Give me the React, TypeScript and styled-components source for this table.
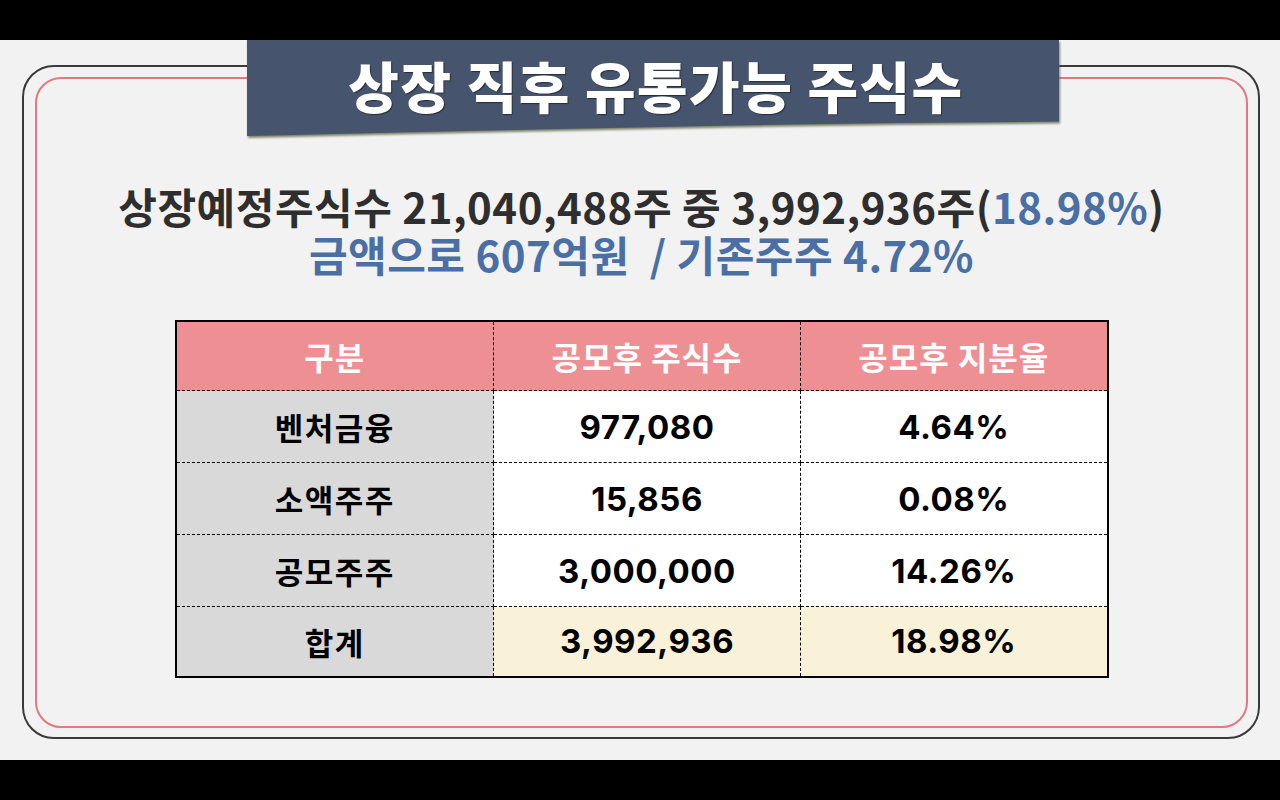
import React from "react";
import styled, { createGlobalStyle } from "styled-components";

interface RowData {
  label: string;
  shares: string;
  ratio: string;
  total?: boolean;
}

const rows: RowData[] = [
  { label: "벤처금융", shares: "977,080", ratio: "4.64%" },
  { label: "소액주주", shares: "15,856", ratio: "0.08%" },
  { label: "공모주주", shares: "3,000,000", ratio: "14.26%" },
  { label: "합계", shares: "3,992,936", ratio: "18.98%", total: true },
];

const headData = ["구분", "공모후 주식수", "공모후 지분율"];

export default function App() {
  return (
    <>
      <GlobalStyle />
      <Page>
        <BlackBar />
        <Stage>
          <OuterFrame>
            <InnerFrame>
              <Summary>
                <SummaryLine>
                  상장예정주식수 21,040,488주 중 3,992,936주(<Blue>18.98%</Blue>)
                </SummaryLine>
                <SummaryLine $blue>금액으로 607억원&nbsp;&nbsp;/ 기존주주 4.72%</SummaryLine>
              </Summary>

              <Table>
                <colgroup>
                  <col style={{ width: 318 }} />
                  <col style={{ width: 307 }} />
                  <col style={{ width: 307 }} />
                </colgroup>
                <thead>
                  <tr>
                    {headData.map((data) => (
                      <HeadCell key={data}>{data}</HeadCell>
                    ))}
                  </tr>
                </thead>
                <tbody>
                  {rows.map((row) => (
                    <BodyRow key={row.label} $total={row.total}>
                      <LabelCell>{row.label}</LabelCell>
                      <ValueCell $total={row.total}>{row.shares}</ValueCell>
                      <ValueCell $total={row.total}>{row.ratio}</ValueCell>
                    </BodyRow>
                  ))}
                </tbody>
              </Table>
            </InnerFrame>
          </OuterFrame>

          <BannerWrap>
            <Banner>
              <BannerTitle>상장 직후 유통가능 주식수</BannerTitle>
            </Banner>
          </BannerWrap>
        </Stage>
        <BlackBar />
      </Page>
    </>
  );
}

const GlobalStyle = createGlobalStyle`
  html, body {
    margin: 0;
    padding: 0;
    background: #000;
  }
  body {
    font-family: "Noto Sans CJK KR", "Noto Sans", sans-serif;
  }
`;

const Page = styled.div`
  width: 1280px;
  height: 800px;
  display: flex;
  flex-direction: column;
  overflow: hidden;
`;

const BlackBar = styled.div`
  height: 40px;
  flex: none;
  background: #000;
`;

const Stage = styled.main`
  position: relative;
  flex: 1;
  background: #f2f2f2;
  padding: 25px 20px 21px 22px;
  box-sizing: border-box;
  display: flex;
`;

const OuterFrame = styled.div`
  flex: 1;
  border: 2px solid #3a3a3a;
  border-radius: 32px;
  padding: 10px 10px 9px 11px;
  display: flex;
`;

const InnerFrame = styled.div`
  flex: 1;
  border: 2px solid #e07a80;
  border-radius: 26px;
  padding-top: 103px;
  display: flex;
  flex-direction: column;
  align-items: center;
`;

const BannerWrap = styled.div`
  position: absolute;
  top: 0;
  left: 247px;
  width: 812px;
  height: 96px;
  filter: drop-shadow(1px 2px 1px rgba(96, 104, 70, 0.8));
`;

const Banner = styled.div`
  height: 100%;
  background: #46556d;
  display: flex;
  align-items: center;
  justify-content: center;
  clip-path: polygon(
    0 0,
    100% 0,
    100% 85%,
    80% 86.5%,
    60% 89%,
    40% 92.5%,
    20% 96%,
    0 100%
  );
`;

const BannerTitle = styled.h1`
  margin: 0 0 8px 6px;
  color: #ffffff;
  font-size: 55px;
  font-weight: 900;
  letter-spacing: 1.5px;
  text-shadow: 1px 1px 1px rgba(30, 35, 45, 0.8);
`;

const Summary = styled.div`
  display: flex;
  flex-direction: column;
  align-items: center;
`;

const SummaryLine = styled.div<{ $blue?: boolean }>`
  font-size: 42px;
  line-height: 48px;
  font-weight: 700;
  letter-spacing: 0.5px;
  color: ${(p) => (p.$blue ? "#4a6fa5" : "#2e2e2e")};
  white-space: pre;
`;

const Blue = styled.span`
  color: #4a6fa5;
`;

const Table = styled.table`
  margin-top: 42px;
  border-collapse: collapse;
  table-layout: fixed;
  border: 2px solid #000;
  width: 932px;
`;

const HeadCell = styled.th`
  height: 68px;
  padding: 0;
  background: #ed8f93;
  color: #ffffff;
  font-size: 32px;
  font-weight: 700;
  letter-spacing: 1px;
  border: 1px dashed #000;
  border-top: 2px solid #000;
`;

const BodyRow = styled.tr<{ $total?: boolean }>`
  height: ${(p) => (p.$total ? "70px" : "72px")};
`;

const LabelCell = styled.td`
  padding: 0;
  background: #d9d9d9;
  color: #000;
  text-align: center;
  font-size: 31px;
  font-weight: 700;
  letter-spacing: 1.5px;
  border: 1px dashed #000;
  border-left: 2px solid #000;
`;

const ValueCell = styled.td<{ $total?: boolean }>`
  padding: 0;
  background: ${(p) => (p.$total ? "#faf2d8" : "#ffffff")};
  color: #000;
  text-align: center;
  font-family: "Inter", "Noto Sans CJK KR", sans-serif;
  font-size: 33px;
  font-weight: 700;
  letter-spacing: 0.5px;
  border: 1px dashed #000;
`;
